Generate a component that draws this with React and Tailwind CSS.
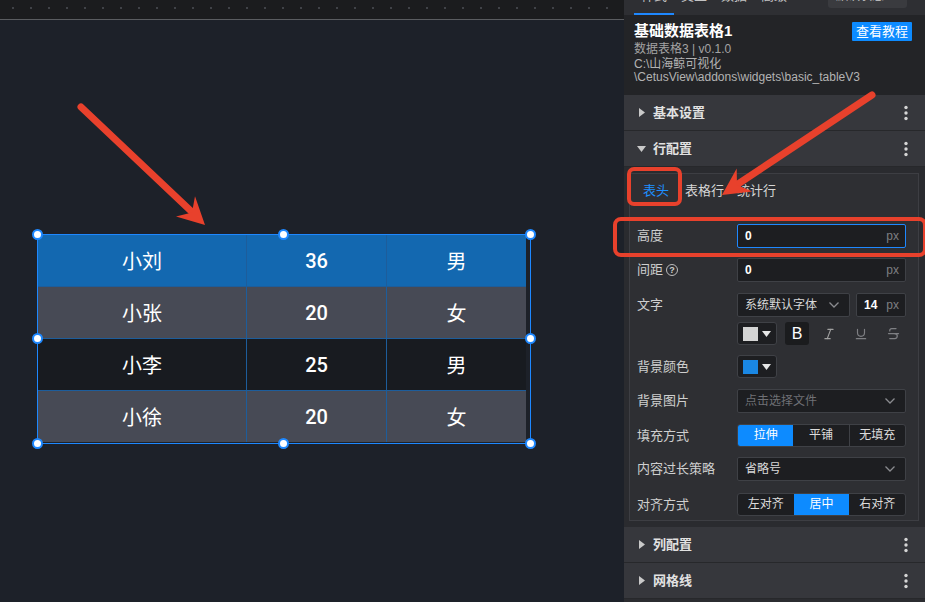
import React from "react";

const Chevron = ({ cls = "" }) => (
  <svg width="12" height="8" viewBox="0 0 12 8" className={cls}>
    <path d="M1.5 1.5 L6 6 L10.5 1.5" fill="none" stroke="#8a8b8f" strokeWidth="1.3" />
  </svg>
);

const Kebab = () => (
  <svg width="4" height="16" viewBox="0 0 4 16">
    <circle cx="2" cy="2.5" r="1.7" fill="#d6d6d6" />
    <circle cx="2" cy="8" r="1.7" fill="#d6d6d6" />
    <circle cx="2" cy="13.5" r="1.7" fill="#d6d6d6" />
  </svg>
);

const TriRight = () => (
  <svg width="6" height="9" viewBox="0 0 6 9">
    <polygon points="0,0 6,4.5 0,9" fill="#c9c9c9" />
  </svg>
);

const TriDown = () => (
  <svg width="9" height="6" viewBox="0 0 9 6">
    <polygon points="0,0 9,0 4.5,6" fill="#c9c9c9" />
  </svg>
);

function Section({ title, open }) {
  return (
    <div className="h-[36px] bg-[#36373c] border-b border-[#27282b] flex items-center pl-[13px] pr-[17px]">
      <div className="w-[9px] flex justify-center">{open ? <TriDown /> : <TriRight />}</div>
      <span className="ml-[7px] text-[13px] font-bold text-[#e2e2e2] leading-[16px]">{title}</span>
      <div className="ml-auto flex">
        <Kebab />
      </div>
    </div>
  );
}

function Row({ label, mt, children, extra }) {
  return (
    <div className={`flex items-center pl-[7px] ${mt}`}>
      <div className="w-[100px] text-[13px] leading-[16px] text-[#cfcfcf] flex items-center gap-[3px]">
        {label}
        {extra}
      </div>
      {children}
    </div>
  );
}

function PxInput({ value, focus, w }) {
  return (
    <div
      className={`${w} h-[24px] bg-[#1d1e21] border ${focus ? "border-[#1e88ff]" : "border-[#3f4146]"} rounded-[2px] flex items-center justify-between pl-[7px] pr-[6px]`}
    >
      <span className="text-[12px] text-white font-bold leading-[14px]">{value}</span>
      <span className="text-[12px] text-[#7d7e82] leading-[14px]">px</span>
    </div>
  );
}

function Select({ text, w, placeholder }) {
  return (
    <div className={`${w} h-[24px] bg-[#1d1e21] border border-[#3f4146] rounded-[2px] flex items-center justify-between pl-[7px] pr-[9px]`}>
      <span className={`text-[12px] leading-[14px] ${placeholder ? "text-[#6f7075]" : "text-[#d8d8d8]"}`}>{text}</span>
      <Chevron />
    </div>
  );
}

function ColorBtn({ color }) {
  return (
    <div className="w-[40px] h-[23px] bg-[#1d1e21] border border-[#3f4146] rounded-[3px] flex items-center pl-[5px] gap-[4px]">
      <div className={`w-[15px] h-[14px] ${color}`} />
      <svg width="9" height="6" viewBox="0 0 9 6">
        <polygon points="0,0 9,0 4.5,6" fill="#e6e6e6" />
      </svg>
    </div>
  );
}

function Segmented({ items, active }) {
  return (
    <div className="w-[169px] h-[23px] border border-[#3f4146] rounded-[3px] overflow-hidden flex bg-[#1d1e21]">
      {items.map((t, i) => (
        <div
          key={t}
          className={`flex-1 text-center text-[12px] leading-[21px] ${
            i === active ? "bg-[#0d8bff] text-white" : "text-[#dcdcdc]"
          } ${i > 0 && i !== active && i - 1 !== active ? "border-l border-[#3f4146]" : ""}`}
        >
          {t}
        </div>
      ))}
    </div>
  );
}

const rows = [
  { name: "小刘", age: "36", sex: "男", bg: "bg-[#1368b0]" },
  { name: "小张", age: "20", sex: "女", bg: "bg-[#474a55]" },
  { name: "小李", age: "25", sex: "男", bg: "bg-[#181b20]" },
  { name: "小徐", age: "20", sex: "女", bg: "bg-[#474a55]" },
];

function Handle({ pos }) {
  return <div className={`absolute w-[11px] h-[11px] rounded-full bg-white border-2 border-[#1e88ff] ${pos}`} />;
}

export default function App() {
  const dots = Array.from({ length: 34 });
  return (
    <div className="relative w-[925px] h-[602px] flex overflow-hidden font-['Liberation_Sans','Noto_Sans_CJK_SC',sans-serif] bg-[#1d2129]">
      {/* Canvas */}
      <div className="w-[624px] h-full flex flex-col">
        <div className="h-[19px] bg-[#1b1c1e] flex pl-[12px] gap-[16px] pt-[7px]">
          {dots.map((_, i) => (
            <div key={i} className="w-[2px] h-[2px] bg-[#404247]" />
          ))}
        </div>
        <div className="h-px bg-[#5a5c60]" />
        <div className="flex-1 relative bg-[#1d2129]">
          <div className="absolute left-[37px] top-[214px] w-[494px] h-[210px] border border-[#1e88ff]">
            <div className="w-[488px] flex flex-col">
              {rows.map((r, i) => (
                <div
                  key={i}
                  className={`flex ${r.bg} ${i < 3 ? "h-[52px] border-b border-[#1d5d9b]" : "h-[51px]"}`}
                >
                  <div className="w-[209px] border-r border-[#1d5d9b] flex items-center justify-center text-white text-[20px] font-['Noto_Sans_CJK_SC',sans-serif]">
                    {r.name}
                  </div>
                  <div className="w-[140px] border-r border-[#1d5d9b] flex items-center justify-center text-white text-[20px] font-medium font-['Roboto',sans-serif]">
                    {r.age}
                  </div>
                  <div className="flex-1 flex items-center justify-center text-white text-[20px] font-['Noto_Sans_CJK_SC',sans-serif]">
                    {r.sex}
                  </div>
                </div>
              ))}
            </div>
            <Handle pos="-left-[6px] -top-[6px]" />
            <Handle pos="left-[240px] -top-[6px]" />
            <Handle pos="left-[487px] -top-[6px]" />
            <Handle pos="-left-[6px] top-[98px]" />
            <Handle pos="left-[487px] top-[98px]" />
            <Handle pos="-left-[6px] top-[203px]" />
            <Handle pos="left-[240px] top-[203px]" />
            <Handle pos="left-[487px] top-[203px]" />
          </div>
        </div>
      </div>

      {/* Panel */}
      <div className="w-[301px] h-full flex flex-col bg-[#2b2c30]">
        <div className="h-[15px] bg-[#2e2f33] overflow-hidden flex items-end pl-[10px]">
          {["样式", "交互", "数据", "高级"].map((t, i) => (
            <div key={t} className="w-[40px] flex flex-col items-center">
              <span className="text-[13px] leading-[13px] text-[#c4c4c4]">{t}</span>
              <div className={`mt-[11px] w-[40px] h-[2px] ${i === 0 ? "bg-[#1e88ff]" : "bg-transparent"}`} />
            </div>
          ))}
          <div className="self-start ml-auto mr-[18px] -mt-[16px] w-[79px] h-[24px] bg-[#3a3b3f] rounded-[3px] flex items-center justify-between px-[8px]">
            <span className="text-[12px] leading-[22px] text-[#cfcfcf]">默认状态</span>
            <Chevron />
          </div>
        </div>

        <div className="h-[80px] bg-[#232427] pl-[10px] pr-[13px]">
          <div className="mt-[6px] h-[20px] flex items-center justify-between">
            <span className="text-[15px] font-bold text-white leading-[20px]">基础数据表格1</span>
            <span className="h-[19px] px-[4px] bg-[#0d8bff] text-white text-[13px] leading-[19px] rounded-[1px]">查看教程</span>
          </div>
          <div className="mt-[1px] text-[12px] leading-[14px] text-[#a3a3a3]">数据表格3 | v0.1.0</div>
          <div className="mt-[2px] text-[12px] leading-[13px] text-[#b3b3b3]">C:\山海鲸可视化</div>
          <div className="text-[12px] leading-[13px] text-[#b3b3b3]">\CetusView\addons\widgets\basic_tableV3</div>
        </div>

        <Section title="基本设置" />
        <Section title="行配置" open />

        <div className="pt-[6px] pl-[5px] pr-[6px] pb-[6px] bg-[#2a2b2f]">
          <div className="border border-[#3d3e43] bg-[#2e2f33] pb-[4px]">
            <div className="flex pl-[7px] pt-[9px]">
              <div className="w-[32px] flex flex-col items-center">
                <span className="text-[13px] leading-[16px] text-[#1e8fff] pl-[6px]">表头</span>
                <div className="mt-[3px] w-[32px] h-[2px] bg-[#1e88ff]" />
              </div>
              <span className="ml-[16px] text-[13px] leading-[16px] text-[#d6d6d6]">表格行</span>
              <span className="ml-[13px] text-[13px] leading-[16px] text-[#d6d6d6]">统计行</span>
            </div>

            <Row label="高度" mt="mt-[20px]">
              <PxInput value="0" focus w="w-[169px]" />
            </Row>
            <Row
              label="间距"
              mt="mt-[10px]"
              extra={
                <span className="w-[12px] h-[12px] rounded-full border border-[#bdbdbd] text-[9px] leading-[10px] text-center text-[#cfcfcf] font-bold">
                  ?
                </span>
              }
            >
              <PxInput value="0" w="w-[169px]" />
            </Row>
            <Row label="文字" mt="mt-[11px]">
              <Select text="系统默认字体" w="w-[113px]" />
              <div className="ml-[6px]">
                <PxInput value="14" w="w-[50px]" />
              </div>
            </Row>
            <Row label="" mt="mt-[5px]">
              <div className="flex items-center gap-[8px]">
                <ColorBtn color="bg-[#d4d4d4]" />
                <div className="w-[24px] h-[23px] bg-[#1b1c1e] rounded-[3px] flex items-center justify-center text-white text-[16px] leading-[16px]">
                  B
                </div>
                <div className="w-[24px] h-[23px] flex items-center justify-center">
                  <svg width="14" height="14" viewBox="0 0 24 24" fill="none" stroke="#a0a0a0" strokeWidth="2" strokeLinecap="round">
                    <line x1="19" y1="4" x2="10" y2="4" />
                    <line x1="14" y1="20" x2="5" y2="20" />
                    <line x1="15" y1="4" x2="9" y2="20" />
                  </svg>
                </div>
                <div className="w-[24px] h-[23px] flex items-center justify-center">
                  <svg width="14" height="14" viewBox="0 0 24 24" fill="none" stroke="#7e7f83" strokeWidth="2" strokeLinecap="round">
                    <path d="M6 4v6a6 6 0 0 0 12 0V4" />
                    <line x1="4" y1="20" x2="20" y2="20" />
                  </svg>
                </div>
                <div className="w-[24px] h-[23px] flex items-center justify-center">
                  <svg width="15" height="15" viewBox="0 0 24 24" fill="none" stroke="#7e7f83" strokeWidth="2" strokeLinecap="round">
                    <path d="M16 4H9a3 3 0 0 0-2.83 4" />
                    <path d="M14 12a4 4 0 0 1 0 8H6" />
                    <line x1="4" y1="12" x2="20" y2="12" />
                  </svg>
                </div>
              </div>
            </Row>
            <Row label="背景颜色" mt="mt-[10px]">
              <ColorBtn color="bg-[#1a87e3]" />
            </Row>
            <Row label="背景图片" mt="mt-[11px]">
              <Select text="点击选择文件" w="w-[169px]" placeholder />
            </Row>
            <Row label="填充方式" mt="mt-[11px]">
              <Segmented items={["拉伸", "平铺", "无填充"]} active={0} />
            </Row>
            <Row label="内容过长策略" mt="mt-[10px]">
              <Select text="省略号" w="w-[169px]" />
            </Row>
            <Row label="对齐方式" mt="mt-[12px]">
              <Segmented items={["左对齐", "居中", "右对齐"]} active={1} />
            </Row>
          </div>
        </div>

        <Section title="列配置" />
        <Section title="网格线" />
      </div>

      {/* Annotations overlay */}
      <svg className="absolute inset-0 pointer-events-none" width="925" height="602" viewBox="0 0 925 602">
        <g stroke="#e8412c" fill="none">
          <line x1="81" y1="107" x2="192" y2="212" strokeWidth="7" strokeLinecap="round" />
          <line x1="872" y1="95" x2="738" y2="184" strokeWidth="7" strokeLinecap="round" />
          <rect x="629" y="169" width="51" height="35" rx="5" strokeWidth="4" />
          <rect x="615" y="219" width="310" height="36" rx="6" strokeWidth="4" />
        </g>
        <polygon points="205,225 176,216.5 192,212.6 195,196.3" fill="#e8412c" />
        <polygon points="722,195 736.7,168.4 737,185 752.3,191.6" fill="#e8412c" />
      </svg>
    </div>
  );
}
